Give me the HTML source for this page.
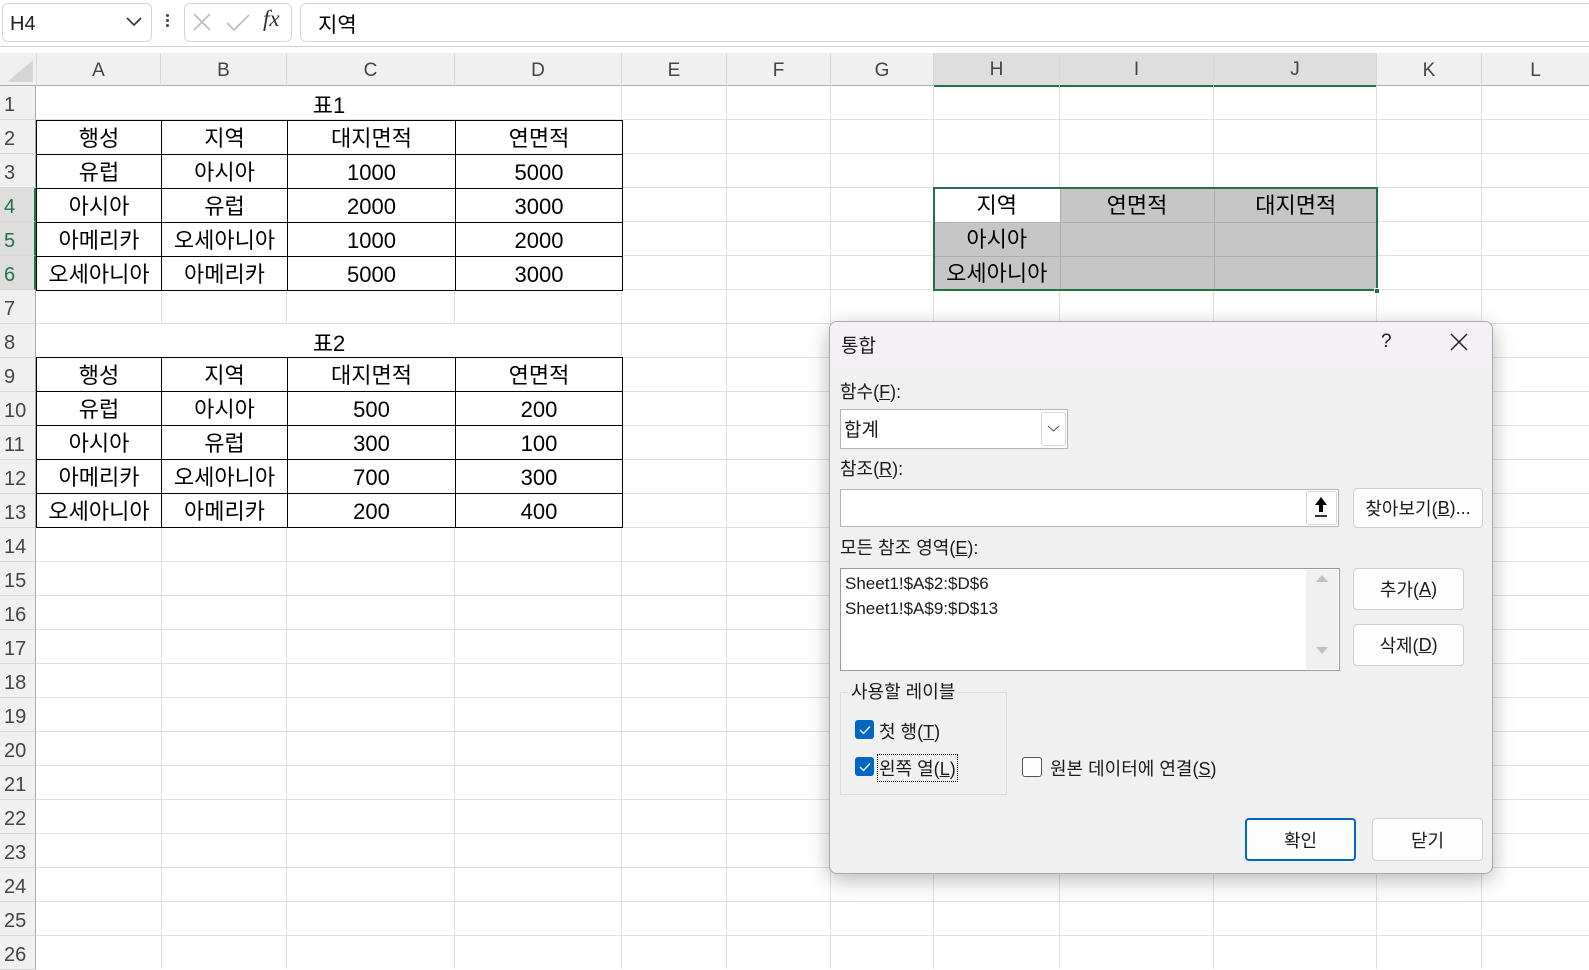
<!DOCTYPE html>
<html><head><meta charset="utf-8">
<style>
*{box-sizing:border-box;margin:0;padding:0}
body{width:1589px;height:969px;overflow:hidden;background:#fff;position:relative;font-family:"Liberation Sans","Noto Sans CJK KR",sans-serif;color:#000}
.a{position:absolute}
.grid{position:absolute;left:36px;top:86px;width:1553px;height:883px;
 background:repeating-linear-gradient(to bottom,transparent 0,transparent 33px,#e1e1e1 33px,#e1e1e1 34px)}
.vl{position:absolute;top:86px;height:883px;width:1px;background:#e1e1e1}
.hdr{position:absolute;top:53px;height:33px;background:#f0f0f0;border-bottom:1px solid #ababab}
.ch{position:absolute;top:53px;height:33px;font-size:19px;color:#444;display:flex;align-items:center;justify-content:center;border-right:1px solid #d8d8d8;padding-top:2px}
.rh{position:absolute;left:0;width:36px;height:34px;background:#f0f0f0;border-right:1px solid #ababab;border-bottom:1px solid #d8d8d8;font-size:20px;color:#444;display:flex;align-items:center;padding-left:4px;padding-top:6px}
table{border-collapse:collapse;position:absolute;font-size:22px;font-family:"Liberation Sans","Noto Sans CJK KR",sans-serif}
td{height:34px;text-align:center;padding:2px 0 0 0;white-space:nowrap;line-height:30px}
.t td{border:1px solid #000;background:#fff}
.ttl{position:absolute;left:37px;width:584px;height:33px;background:#fff;font-size:22px;display:flex;align-items:center;justify-content:center;padding-top:2px}
.dlg{position:absolute;left:829px;top:321px;width:664px;height:553px;background:#f0f0f0;border:1px solid #a8a8a8;border-radius:8px;box-shadow:0 6px 22px rgba(0,0,0,.28);overflow:hidden;font-family:"Liberation Sans","Noto Sans CJK KR",sans-serif;font-size:18px;color:#1a1a1a}
.d{position:absolute}
.btn{position:absolute;background:#fdfdfd;border:1px solid #cfcfcf;border-radius:4px;display:flex;align-items:center;justify-content:center;font-size:18px}
u{text-decoration:underline}
.cb{position:absolute;width:19px;height:19px;border-radius:3px;background:#0067c0;display:flex;align-items:center;justify-content:center}
</style></head><body>

<div class="a" style="left:0;top:0;width:1589px;height:47px;background:#fff;border-bottom:1px solid #d0d0d0"></div>
<div class="a" style="left:2px;top:3px;width:150px;height:39px;border:1px solid #d6d6d6;border-radius:6px;font-size:20px;padding:9px 0 0 7px;color:#222">H4</div>
<svg class="a" style="left:126px;top:17px" width="16" height="10"><path d="M1 1 L8 8 L15 1" fill="none" stroke="#333" stroke-width="1.6"/></svg>
<div class="a" style="left:166px;top:14px;width:3px;height:3px;background:#444;border-radius:2px;box-shadow:0 5px 0 #444,0 10px 0 #444"></div>
<div class="a" style="left:184px;top:3px;width:108px;height:39px;border:1px solid #d6d6d6;border-radius:6px"></div>
<svg class="a" style="left:192px;top:12px" width="22" height="22"><path d="M2 2 L18 18 M18 2 L2 18" stroke="#bcbcbc" stroke-width="1.6"/></svg>
<svg class="a" style="left:225px;top:12px" width="26" height="22"><path d="M2 11 L9 18 L24 3" fill="none" stroke="#bcbcbc" stroke-width="1.6"/></svg>
<div class="a" style="left:263px;top:6px;font-family:'Liberation Serif',serif;font-style:italic;font-size:23px;color:#333">fx</div>
<div class="a" style="left:300px;top:3px;width:1300px;height:39px;border:1px solid #d6d6d6;border-radius:6px;font-size:21px;padding:5px 0 0 17px">지역</div>

<div class="hdr" style="left:0;width:1589px"></div>
<svg class="a" style="left:7px;top:60px" width="27" height="23"><path d="M26 0 L26 22 L0 22 Z" fill="#d5d5d5"/></svg>
<div class="a" style="left:36px;top:53px;width:1px;height:33px;background:#d8d8d8"></div>
<div class="ch" style="left:37px;width:124px">A</div>
<div class="ch" style="left:161px;width:126px">B</div>
<div class="ch" style="left:287px;width:168px">C</div>
<div class="ch" style="left:455px;width:167px">D</div>
<div class="ch" style="left:622px;width:105px">E</div>
<div class="ch" style="left:727px;width:104px">F</div>
<div class="ch" style="left:831px;width:103px">G</div>
<div class="ch" style="left:934px;width:126px;background:#dedede;border-bottom:2px solid #217346;height:34px">H</div>
<div class="ch" style="left:1060px;width:154px;background:#dedede;border-bottom:2px solid #217346;height:34px">I</div>
<div class="ch" style="left:1214px;width:163px;background:#dedede;border-bottom:2px solid #217346;height:34px">J</div>
<div class="ch" style="left:1377px;width:105px">K</div>
<div class="ch" style="left:1482px;width:107px;border-right:none">L</div>

<div class="grid"></div>
<div class="vl" style="left:161px"></div><div class="vl" style="left:286px"></div><div class="vl" style="left:454px"></div><div class="vl" style="left:621px"></div><div class="vl" style="left:726px"></div><div class="vl" style="left:830px"></div><div class="vl" style="left:933px"></div><div class="vl" style="left:1059px"></div><div class="vl" style="left:1213px"></div><div class="vl" style="left:1376px"></div><div class="vl" style="left:1481px"></div>

<div class="rh" style="top:86px">1</div>
<div class="rh" style="top:120px">2</div>
<div class="rh" style="top:154px">3</div>
<div class="rh" style="top:188px;background:#dedede;border-right:2px solid #217346;color:#217346">4</div>
<div class="rh" style="top:222px;background:#dedede;border-right:2px solid #217346;color:#217346">5</div>
<div class="rh" style="top:256px;background:#dedede;border-right:2px solid #217346;color:#217346">6</div>
<div class="rh" style="top:290px">7</div>
<div class="rh" style="top:324px">8</div>
<div class="rh" style="top:358px">9</div>
<div class="rh" style="top:392px">10</div>
<div class="rh" style="top:426px">11</div>
<div class="rh" style="top:460px">12</div>
<div class="rh" style="top:494px">13</div>
<div class="rh" style="top:528px">14</div>
<div class="rh" style="top:562px">15</div>
<div class="rh" style="top:596px">16</div>
<div class="rh" style="top:630px">17</div>
<div class="rh" style="top:664px">18</div>
<div class="rh" style="top:698px">19</div>
<div class="rh" style="top:732px">20</div>
<div class="rh" style="top:766px">21</div>
<div class="rh" style="top:800px">22</div>
<div class="rh" style="top:834px">23</div>
<div class="rh" style="top:868px">24</div>
<div class="rh" style="top:902px">25</div>
<div class="rh" style="top:936px">26</div>

<div class="ttl" style="top:86px">표1</div>
<table class="t" style="left:36px;top:120px">
<colgroup><col style="width:125px"><col style="width:126px"><col style="width:168px"><col style="width:167px"></colgroup>
<tr><td>행성</td><td>지역</td><td>대지면적</td><td>연면적</td></tr>
<tr><td>유럽</td><td>아시아</td><td>1000</td><td>5000</td></tr>
<tr><td>아시아</td><td>유럽</td><td>2000</td><td>3000</td></tr>
<tr><td>아메리카</td><td>오세아니아</td><td>1000</td><td>2000</td></tr>
<tr><td>오세아니아</td><td>아메리카</td><td>5000</td><td>3000</td></tr>
</table>

<div class="ttl" style="top:324px">표2</div>
<table class="t" style="left:36px;top:357px">
<colgroup><col style="width:125px"><col style="width:126px"><col style="width:168px"><col style="width:167px"></colgroup>
<tr><td>행성</td><td>지역</td><td>대지면적</td><td>연면적</td></tr>
<tr><td>유럽</td><td>아시아</td><td>500</td><td>200</td></tr>
<tr><td>아시아</td><td>유럽</td><td>300</td><td>100</td></tr>
<tr><td>아메리카</td><td>오세아니아</td><td>700</td><td>300</td></tr>
<tr><td>오세아니아</td><td>아메리카</td><td>200</td><td>400</td></tr>
</table>

<table style="left:934px;top:188px">
<colgroup><col style="width:126px"><col style="width:154px"><col style="width:163px"></colgroup>
<tr><td style="background:#fff;border-right:1px solid #adadad;border-bottom:1px solid #adadad">지역</td><td style="background:#c6c6c6;border-right:1px solid #adadad;border-bottom:1px solid #adadad">연면적</td><td style="background:#c6c6c6;border-bottom:1px solid #adadad">대지면적</td></tr>
<tr><td style="background:#c6c6c6;border-right:1px solid #adadad;border-bottom:1px solid #adadad">아시아</td><td style="background:#c6c6c6;border-right:1px solid #adadad;border-bottom:1px solid #adadad"></td><td style="background:#c6c6c6;border-bottom:1px solid #adadad"></td></tr>
<tr><td style="background:#c6c6c6;border-right:1px solid #adadad">오세아니아</td><td style="background:#c6c6c6;border-right:1px solid #adadad"></td><td style="background:#c6c6c6"></td></tr>
</table>
<div class="a" style="left:933px;top:187px;width:445px;height:104px;border:2px solid #217346"></div>
<div class="a" style="left:1374px;top:288px;width:6px;height:6px;background:#217346;border:1px solid #fff"></div>

<div class="dlg">
 <div class="d" style="left:0;top:0;width:664px;height:44px;background:#f3f1f6"></div>
 <div class="d" style="left:11px;top:9px;font-size:19px">통합</div>
 <div class="d" style="left:551px;top:9px;font-size:19px">?</div>
 <svg class="d" style="left:620px;top:11px" width="18" height="18"><path d="M1 1 L17 17 M17 1 L1 17" stroke="#222" stroke-width="1.5"/></svg>

 <div class="d" style="left:10px;top:56px">함수(<u>F</u>):</div>
 <div class="d" style="left:10px;top:87px;width:228px;height:40px;background:#fff;border:1px solid #b5b5b5"></div>
 <div class="d" style="left:14px;top:93px;font-size:19px">합계</div>
 <div class="d" style="left:211px;top:90px;width:25px;height:34px;border:1px solid #d5d5d5;border-radius:3px;background:#fff"></div>
 <svg class="d" style="left:217px;top:103px" width="13" height="8"><path d="M1 1 L6.5 6 L12 1" fill="none" stroke="#555" stroke-width="1"/></svg>

 <div class="d" style="left:10px;top:133px">참조(<u>R</u>):</div>
 <div class="d" style="left:10px;top:167px;width:499px;height:38px;background:#fff;border:1px solid #b5b5b5"></div>
 <div class="d" style="left:476px;top:169px;width:31px;height:34px;border:1px solid #d5d5d5;border-radius:3px;background:#fff"></div>
 <svg class="d" style="left:483px;top:174px" width="16" height="22"><path d="M8 1 L2 9 L6 9 L6 16 L10 16 L10 9 L14 9 Z" fill="#000"/><path d="M2 20 L14 20" stroke="#000" stroke-width="1.6"/></svg>
 <div class="btn" style="left:523px;top:166px;width:130px;height:40px">찾아보기(<u>B</u>)...</div>

 <div class="d" style="left:10px;top:212px">모든 참조 영역(<u>E</u>):</div>
 <div class="d" style="left:10px;top:246px;width:500px;height:103px;background:#fff;border:1px solid #9a9a9a"></div>
 <div class="d" style="left:476px;top:248px;width:32px;height:99px;background:#f0f0f0"></div>
 <svg class="d" style="left:485px;top:251px" width="14" height="10"><path d="M1 9 L7 2 L13 9 Z" fill="#c0c0c0"/></svg>
 <svg class="d" style="left:485px;top:324px" width="14" height="10"><path d="M1 1 L7 8 L13 1 Z" fill="#c0c0c0"/></svg>
 <div class="d" style="left:15px;top:252px;font-size:17px">Sheet1!$A$2:$D$6</div>
 <div class="d" style="left:15px;top:277px;font-size:17px">Sheet1!$A$9:$D$13</div>
 <div class="btn" style="left:523px;top:246px;width:111px;height:42px">추가(<u>A</u>)</div>
 <div class="btn" style="left:523px;top:302px;width:111px;height:42px">삭제(<u>D</u>)</div>

 <div class="d" style="left:10px;top:370px;width:167px;height:103px;border:1px solid #dcdcdc"></div>
 <div class="d" style="left:18px;top:356px;background:#f0f0f0;padding:0 3px">사용할 레이블</div>
 <div class="cb" style="left:25px;top:398px"><svg width="12" height="10"><path d="M1 5 L4.5 8.5 L11 1.5" fill="none" stroke="#fff" stroke-width="1.3"/></svg></div>
 <div class="d" style="left:49px;top:396px">첫 행(<u>T</u>)</div>
 <div class="cb" style="left:25px;top:435px"><svg width="12" height="10"><path d="M1 5 L4.5 8.5 L11 1.5" fill="none" stroke="#fff" stroke-width="1.3"/></svg></div>
 <div class="d" style="left:47px;top:432px;border:1px dotted #000;padding:0 1px;height:28px">왼쪽 열(<u>L</u>)</div>
 <div class="d" style="left:192px;top:435px;width:20px;height:20px;border:1.5px solid #555;border-radius:3px;background:#fdfdfd"></div>
 <div class="d" style="left:220px;top:433px">원본 데이터에 연결(<u>S</u>)</div>

 <div class="btn" style="left:415px;top:496px;width:111px;height:43px;border:2px solid #0067c0">확인</div>
 <div class="btn" style="left:542px;top:496px;width:111px;height:43px">닫기</div>
</div>
</body></html>
